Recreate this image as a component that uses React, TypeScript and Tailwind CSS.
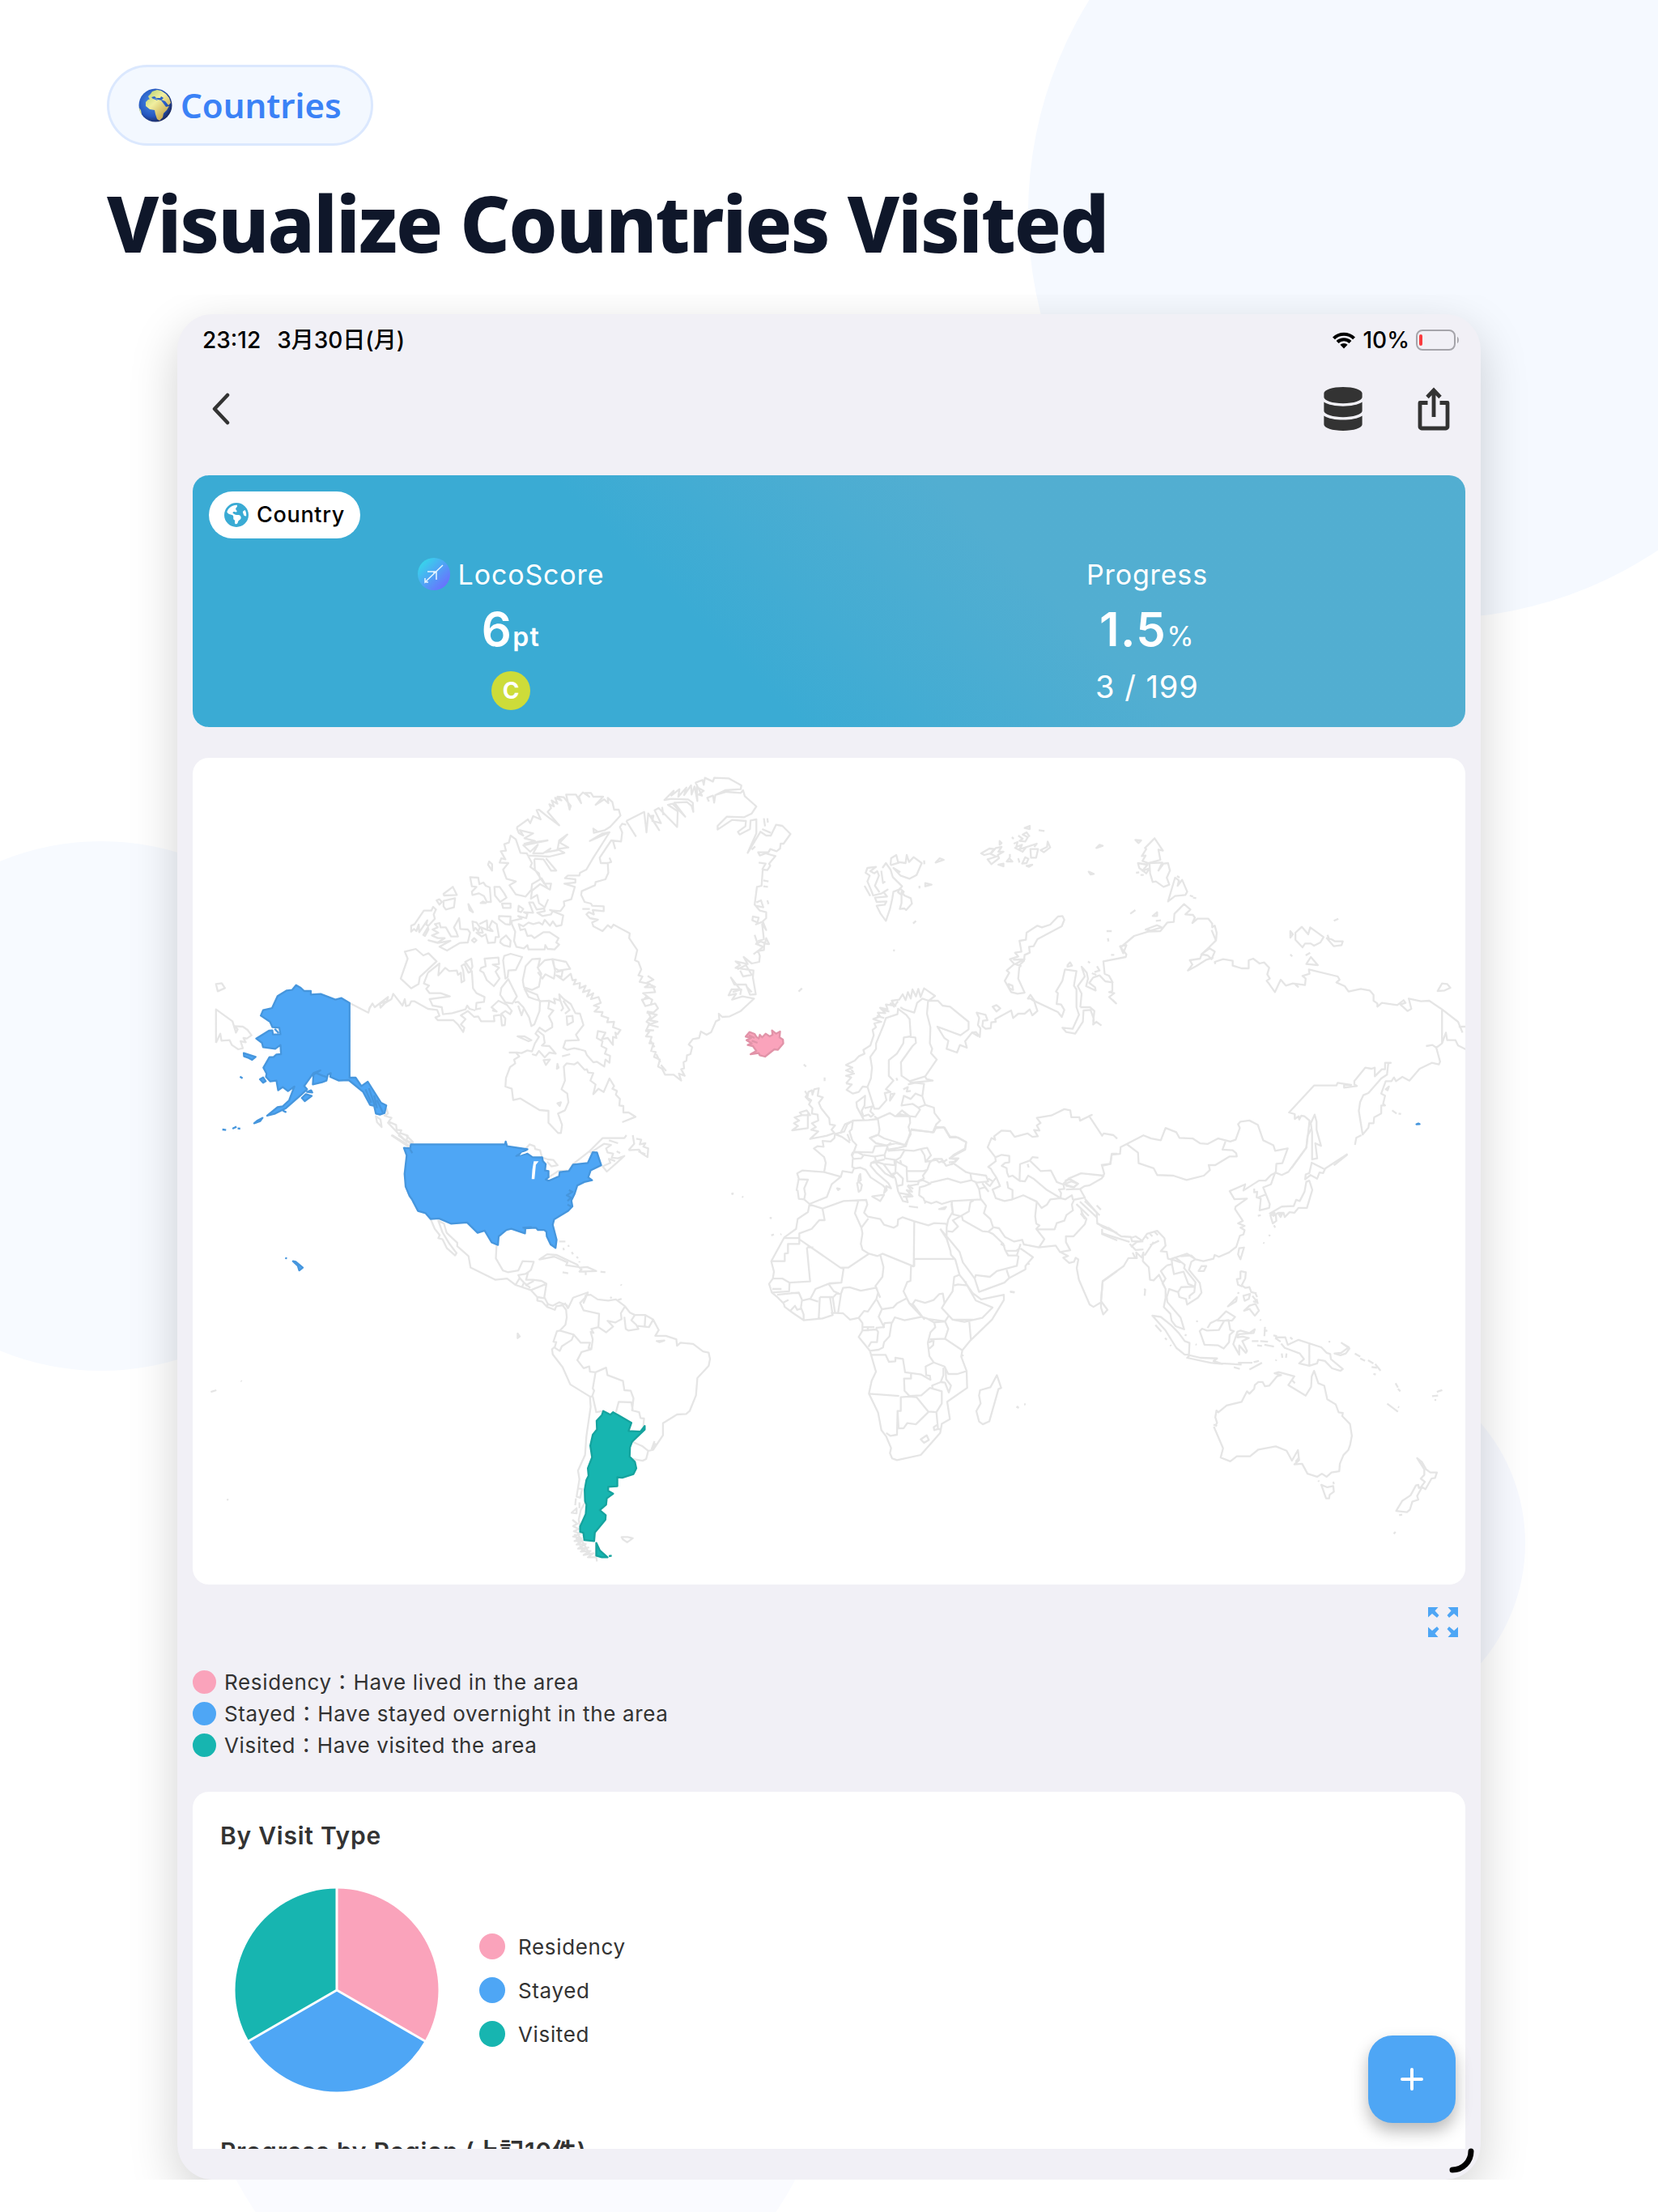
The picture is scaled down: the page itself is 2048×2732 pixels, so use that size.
import { FaDatabase } from 'react-icons/fa';
import { FaEarthAmericas } from 'react-icons/fa6';

interface MapSheet {
  transform: string;
  land: string;
  stayed?: string;
  visited?: string;
  residency?: string;
}

const visitTypes = [
  { name: 'Residency', note: 'Have lived in the area', dot: 'bg-[#faa3bb]' },
  { name: 'Stayed', note: 'Have stayed overnight in the area', dot: 'bg-[#4ea6f5]' },
  { name: 'Visited', note: 'Have visited the area', dot: 'bg-[#17b5b0]' },
];

// Mercator outlines, one sheet per part of the world
const sheets: MapSheet[] = [
  // Alaska and northern Canada
  {
    transform: 'translate(-8 -4) scale(.357143 .333333)',
    land: `
      M103 850 123 847 134 865 109 877Z
      M103 1068 103 944 160 988 172 1030 178 1018 168 1006 196 1008 212 1020 226 1040 210 1052 198 1050 206 1066 188 1062 196 1088 180 1092 158 1076 150 1058 122 1060 118 1034 103 1068
      M565 920 630 956 636 934 632 944 644 922 652 936 698 898 694 914 670 922 672 938 688 920 710 906 716 886 748 930 756 906 760 932 772 928 778 914 790 914 836 942 868 946 876 968 862 974 870 984 924 984 940 1000 958 1028 962 1012 950 1000 966 980 950 966 974 950 996 972 1010 970 1020 988 1066 988 1064 968 1088 964 1092 1004 1102 1002 1104 978 1090 960 1104 950 1120 962 1126 950 1110 928 1080 912 1056 936 1074 952 1058 948
      M756 730 794 720 820 744 838 736 866 766 808 824 804 850 778 866 742 830 766 756Z
      M836 808 876 774 872 818 896 790 910 802 936 800 940 816 950 808 952 844 962 838 958 800 952 782 962 776 976 808 988 802 992 866 1004 884 1032 898 1030 916 1004 920 1002 944 1020 940 M836 808 822 848 840 856 830 868 842 884 880 884 912 896 842 906 852 930 884 936 888 962 920 958 966 944 972 930 980 942 1000 948
      M965 768 986 756 990 786 984 798Z
      M890 516 922 490 936 520 892 522Z M866 540 876 536 884 546 876 556Z M890 542 930 532 926 566 898 574 890 562Z
      M778 634 790 628 822 578 848 578 854 564 864 574 856 592 860 608 838 634 830 630 834 614 806 658 804 630 796 654 788 646 778 656Z
      M820 668 836 640 838 648 826 672Z M838 688 870 696 894 680 870 680 850 670 872 660 852 648 870 640 860 628 876 624 880 640 898 640 916 674 940 674 934 656 926 640 944 606 948 646 974 648 982 660 974 696 946 698 902 726 876 712 914 690 870 698Z
      M982 454 1010 456 1014 480 1028 474 1036 486 1050 492 1054 546 1040 546 1030 524 1012 514 990 520 988 508 1004 490 988 488Z
      M1048 396 1058 406 1058 430 1044 408Z M1066 490 1084 490 1100 514 1108 530 1086 546 1068 522Z
      M976 554 992 584 980 576Z M1018 550 1026 544 1036 550Z M1092 552 1122 552 1122 568 1096 568Z M1150 560 1166 572 1158 584 1148 580Z
      M990 618 1004 622 1016 640 1010 654 1000 642 994 652Z M1014 628 1040 614 1042 650 1020 640 1026 660 1004 660 1022 674 1036 666 1044 698 1068 696 1070 676 1082 676 1074 628 1058 616 1048 640 1060 654 1040 650
      M1082 598 1122 600 1120 630 1104 628 1082 610Z M996 680 1004 688 996 696 988 688Z M1088 686 1106 670 1122 690 1120 712 1098 706 1086 696Z
      M1126 616 1160 608 1148 598 1176 606 1180 590 1168 584 1200 586 1186 548 1200 548 1212 574 1238 570 1240 580 1214 586 1232 598 1262 592 1268 578 1258 576 1304 596 1298 632 1280 636 1268 618 1258 634 1240 612 1232 630 1220 622 1200 628 1184 622 1166 636 1150 628 1156 650 1172 646 1180 672 1194 670 1204 680 1236 658 1256 658 1288 680 1280 696 1290 704 1274 722 1250 720 1242 706 1240 722 1184 722 1180 706 1168 718 1142 712 1134 690 1138 656 1126 628Z
      M1100 746 1122 738 1162 750 1140 798 1114 800 1112 824 1104 830 1096 762Z
      M1020 790 1036 784 1032 756 1080 752 1082 776 1060 778 1082 790 1070 804 1084 830 1064 858 1040 836 1028 808 1016 800Z
      M1196 758 1224 756 1216 790 1228 812 1220 860 1196 872 1168 862 1164 836 1174 784Z
      M1114 832 1144 896 1128 922 1104 918 1086 890 1090 864Z
      M1268 758 1314 768 1328 794 1288 800 1274 790Z M1214 790 1240 762 1266 758 1276 800 1272 830 1242 814 1232 830 1216 806
      M1280 806 1302 800 1298 824 1280 818 1304 836 1330 812 1336 836 1348 834 1340 852 1362 846 1360 866 1382 856 1372 880 1396 872 1386 896 1408 884 1400 906 1426 898 1434 920 1410 930 1428 936 1412 952 1440 954 1436 968 1460 976 1456 992 1480 990 1476 1010 1502 1020 1492 1036 1484 1030 1488 1050 1476 1046 1476 1076 1458 1050 1438 1054 1450 1030 1424 1024 1420 1050 1440 1062 1436 1080 1454 1090 1448 1108 1466 1116 1464 1142 1450 1130 1446 1156 1420 1138 1408 1140 1386 1114 1380 1098 1360 1092 1342 1088 1318 1094 1304 1086 1312 1060 1358 1058 1348 1038 1374 1002 1362 960 1346 958 1330 924 1306 906 1290 888 1294 912 1272 904 1276 922 1256 912 1222 914 1214 890 1186 878 1168 866
      M1170 868 1184 898 1204 906 1224 912 1222 950 1204 1000 1194 1006 1186 974 1166 936 1148 916 1136 918 M1148 930 1160 966 1168 940
      M1316 970 1336 968 1338 990 1318 1002Z M1290 900 1304 940 1296 950 M1304 912 1326 946 1310 960
      M1256 912 1252 940 1270 948 1254 970 1266 996 1266 1010 1242 1026 1222 1012 1208 1034 1220 1046 1206 1070 1196 1100 1180 1096 1160 1106 1142 1104 1116 1104 M1146 1044 1170 1044 1194 1058 1184 1062Z
      M1214 1022 1236 1040 1240 1068 1230 1078 1256 1080 1278 1108 1256 1104 1240 1122 1220 1098 1210 1114 1196 1110
      M1140 1104 1152 1118 1134 1130 1138 1144 1120 1158 1106 1198 1104 1230 1126 1238 1131 1280 1156 1274 1222 1317 1253 1320 1253 1364 1286 1402 1296 1402 1300 1372 1286 1330 1310 1318 1322 1288 1318 1256 1298 1240 1310 1208 1306 1156 1316 1144 1342 1148 1354 1140 1378 1168 1386 1166 1390 1178 1408 1180 1398 1208 1416 1222 1408 1258 1426 1238 1444 1250 1464 1200 1480 1228 1474 1238 1490 1246 1486 1260 1500 1276 1498 1300 1512 1302 1512 1326 1530 1326 1554 1342 1508 1362
      M1236 1132 1258 1130 1244 1150Z M1284 1146 1288 1160 1282 1164Z M1284 1292 1296 1288 1292 1302Z M1300 1118 1328 1110
      M692 1310 698 1330 686 1338 710 1346 700 1360 726 1372 728 1390 744 1392 740 1402 766 1412 762 1430 782 1440 776 1452 712 1410 M656 1340 672 1352 676 1380 660 1362Z M696 1362 730 1400 756 1430
      M1143 270 1182 240 1190 254 1200 228 1226 240 1212 206 1220 204 1250 230 1290 262 1250 212 1262 198 1256 184 1272 192 1264 170 1284 182 1276 160 1298 170 1284 156 1306 158 1330 190 1326 204 1314 148 1348 148 1366 180 1358 156 1372 140 1394 156 1380 142 1400 142 1408 156 1442 156 1416 186 1446 166 1460 180 1458 160 1474 176 1480 204 1496 204 1502 226 1466 268 1448 280 1410 290 1408 274 1424 286 M1464 288 1396 320 1440 292 1464 288 1408 382 1384 426 1362 438 1360 448 1320 448 1310 458 1346 462 1346 474 1308 478 1344 490 1332 536 1306 544 1308 560 1294 580 1270 578
      M1143 270 1150 290 1166 300 1154 280 1200 292 1170 310 1206 320 1170 330 1250 318 1166 336 1190 360 1216 334 1200 366 1234 366 1260 348 1244 362 1284 354 1290 318 1318 296 1292 326 1322 344 1284 350 1308 364 1256 378 1180 374
      M1122 300 1140 314 1156 364 1178 366 1196 402 1190 416 1220 440 1224 462 1196 480 1194 500 1174 526 1140 518 1118 484 1140 470 1108 460 1096 426 1114 402 1084 400 1090 384 1104 388 1088 358 1106 356 1100 332 1116 326Z
      M1204 386 1236 388 1262 430 1280 430 1244 384 M1204 386 1206 426 1238 478 1262 478 1258 500 1224 480 1196 504 1192 534 1214 520 1220 550 1240 566 1252 536 M1228 456 1250 496`,
    stayed: `
      M565 920 537 902 516 908 465 887 431 889 431 876 408 876 396 864 380 854 366 872 348 874 316 895 297 939 266 947 258 967 290 990 298 1010 322 1012 326 1036 300 1037 298 1022 286 1023 242 1052 262 1068 266 1084 308 1090 326 1076 328 1110 312 1111 302 1121 288 1121 267 1160 278 1182 276 1194 291 1211 312 1208 318 1244 334 1232 352 1247 374 1230 356 1281 334 1303 316 1306 280 1338 308 1330 345 1310 400 1258 418 1240 408 1228 440 1180 464 1170 440 1186 438 1222 470 1214 485 1208 490 1186 500 1180 498 1194 528 1208 562 1206 612 1250 622 1270 636 1298 650 1302 656 1330 670 1334 686 1328 692 1300 674 1290 628 1212 606 1228 586 1197 565 1197Z
      M199 1106 240 1120 228 1131 216 1124 200 1118Z M186 1193 195 1199 M255 1203 266 1196 275 1210 266 1216Z
      M400 1272 414 1258 434 1265 410 1284Z M418 1250 432 1244 436 1252Z M336 1320 344 1324Z
      M235 1366 245 1357 264 1346 256 1358Z M160 1386 174 1379 M178 1385 187 1386 M125 1389 138 1391
      M306 1016 320 1032 M620 1240 640 1290 M632 1236 652 1300 M650 1262 660 1310 M660 1280 680 1326 M450 1180 472 1190 490 1196`,
  },
  // Greenland, Iceland, Svalbard and Scandinavia
  {
    transform: 'translate(462 -4) scale(.357143 .333333)',
    land: `
      M206 246 268 212 276 288 282 218 320 280 290 228 300 226 296 246 326 254 304 206 318 198 382 268 384 210 350 186 366 182 410 230 372 178 416 176 432 190 438 212 436 178 420 166 362 164 338 168 370 134 362 152 390 128 386 156 414 122 406 150 430 114 432 148 442 118 452 172 450 120 474 134 456 148 468 152 446 104 470 94 474 112 478 86 506 100 510 86 560 88 604 114 602 128 548 132 514 150 510 178 506 152 486 160 492 174 M514 150 552 138 602 142 610 132 616 154 656 192 640 218 614 232 554 230 522 264 522 278 572 242 620 246 618 266 592 286 598 296 634 276 636 244 656 240 656 292 626 364 670 286 690 300 706 300 724 260 746 264 774 294 750 330 740 330 738 348 726 358 704 350 698 362 662 362 668 374 688 366 722 376 700 404 704 412 694 428 678 426 674 486 658 490 650 556 668 578 690 584 690 606 678 618 690 650 676 628 682 684 664 690 684 698 682 724 662 728 668 746 666 768 640 774 612 750 626 776 584 766 600 780 584 790 646 800 644 826 654 888 634 890 620 852 580 852 568 826 600 870 570 870 560 892 586 886 572 908 608 896 648 904 628 924 602 950 564 970 538 972 526 960 528 982 516 988 500 1028 484 1038 464 1026 458 1050 436 1054 422 1074 434 1084 428 1110 416 1114 414 1134 404 1140 406 1162 396 1166 408 1190 388 1182 396 1208 370 1186 340 1186 330 1164 316 1156 322 1130 302 1120 308 1102 292 1098 300 1070 286 1070 294 1046 274 1044 286 1026 274 1024 286 996 276 990 290 972 280 952 300 956 316 940 306 922 272 932 260 908 286 902 264 884 306 880 300 862 270 862 288 850 252 842 262 822 248 818 258 796 248 768 236 762 244 724 216 680 218 662 162 630 154 642 142 632 124 654 92 636 88 622 108 612 80 606 68 592 76 584 94 592 90 576 128 580 128 562 88 560 84 552 62 546 50 520 52 506 98 484 100 472 134 462 144 438 142 402 118 402 114 382 154 318 188 322 192 288 184 268 192 256 206 260
      M206 246 240 304 M54 572 80 572 M148 382 154 398 142 402 M160 320 168 350 M330 194 334 224 M682 236 686 266 M694 236 696 252 M676 276 706 290 M664 400 688 404 676 426 M680 466 698 470 M680 488 696 490 M656 548 672 540 680 566 654 560 M694 540 698 554 M644 600 664 604 660 622 642 614Z M652 630 676 620 M650 668 660 700 674 690 M690 680 700 702 686 700Z M652 700 680 712 646 740 M590 796 620 780 640 816 610 822 600 800 M574 880 604 870 600 890 M622 860 640 880
      M262 912 276 896 296 908 290 928 M280 820 300 834 276 846 308 862 M276 956 312 964 286 984 314 990 284 1000 318 1010 M276 1020 302 1022 M290 1060 304 1084 M310 1110 324 1140 M326 1150 344 1172
      M640 352 652 340 M1092 420 1104 402 1120 426 1128 454 1160 488 1150 500 1130 508 1126 534 1118 572 1104 616 1086 590 1072 560 1100 556 1106 544 1072 546 1066 530 1108 526 1096 510 1110 500 1090 514 1060 522 1052 500 1040 470 1048 448 1034 438 1040 420 1070 416 1050 432 1064 440 1074 432 1080 448 1066 486 1082 510 M1088 430 1094 476 1102 470
      M1030 486 1050 524 M1120 410 1122 384 1140 372 1146 398 1172 402 1176 372 1184 398 1200 380 1228 402 1210 446 1186 460 1154 448 1130 420 1154 436 M1120 410 1150 400 M1158 508 1168 522 1190 532 1194 552 1174 576 1168 570 1152 572 1158 550Z M1152 496 1166 508 1158 520 1146 510Z
      M1276 400 1290 384 1304 390Z M1240 476 1262 482 1240 488Z M1236 392 1237 406 M1220 486 1220 496 M1198 626 1208 616 M1129 725 1135 726 M802 878 814 866 M820 1148 828 1156 M892 1196 892 1210
      M966 1218 986 1222 968 1242 990 1256 1010 1250 1024 1230 1040 1232 1052 1200 1056 1160 1050 1120 1070 1090 1070 1070 1096 1002 1104 976 1144 962 1146 942 1174 964 1186 980 1190 1044 1166 1048 1164 1070 1142 1108 1114 1132 1114 1190 1130 1208 1104 1240 1120 1250 1100 1254 1106 1280 1090 1300 1080 1312 1064 1312 1040 1230
      M966 1218 984 1196 966 1190 994 1182 966 1170 988 1160 966 1150 996 1134 1010 1118 1030 1108 1026 1094 1050 1078 1062 1040 1058 1020 1070 1010 1064 996 1088 990 1060 980 1084 970 1076 956 1102 958 1084 938 1110 944 1104 926 1134 930 1124 912 1150 908 1162 888 1172 910 1180 880 1190 904 1196 870 1208 896 1216 868 1224 898 1236 866 1274 894 1252 912 1230 904 1212 920 1202 956 1166 944 1154 936
      M1072 968 1098 976 M1090 946 1116 952 M1118 920 1140 932 M1130 936 1146 914 M980 1160 992 1178 M1250 912 1246 960 1258 1010 1256 1070 1264 1090 1260 1106 1280 1130 1240 1192 1186 1210 1158 1190 1156 1140 1196 1080 1208 1068 1206 1048 1186 1046
      M1240 1192 1244 1202 1266 1208 1186 1216 M1252 912 1284 912 1300 930 1326 934 1390 990 1390 1018 1362 1040 1282 1008 1306 1050 1320 1060 1314 1090 1350 1104 1360 1076 1384 1086 1378 1062 1402 1030 1424 1044
      M1120 1258 1134 1256 1118 1282Z M1140 1198 1144 1208 M1164 1240 1180 1232 1176 1248 1190 1246 M1180 1222 1206 1216 1236 1220 1230 1266 1206 1256 1190 1276 1166 1264 1158 1300 1196 1294 1216 1308 1222 1316 1206 1342 1188 1340 M1230 1266 1240 1298 1216 1308 M1140 1338 1160 1318 1182 1340Z M1240 1298 1270 1308 1272 1328 1292 1356 1278 1370 1266 1400 1190 1388 M1306 1380 1278 1384
      M1076 1348 1118 1328 1136 1340 1186 1340 1188 1364 1182 1380 1190 1406 1170 1446 1098 1422 1078 1410 1082 1390Z
      M1028 1354 1004 1306 1002 1288 1032 1264 1030 1300 1020 1320 1026 1340 1044 1334 1052 1342 1062 1334 1050 1322 1056 1304 1030 1310 M1064 1340 1076 1350 1044 1354 990 1356 986 1388 978 1396 988 1430 1002 1446 988 1486 M946 1404 962 1370 984 1360
      M1078 1408 1048 1420 1070 1440 1106 1448 1140 1440 1170 1446 M1190 1406 1184 1390 M1306 1380 1326 1416 1346 1416 1382 1436 1378 1464 1350 1480 1324 1496 1350 1500 1330 1520
      M872 1236 868 1264 886 1270 872 1290 880 1310 908 1348 910 1370 928 1374 916 1390 926 1402 900 1412 842 1424 870 1396 846 1390 862 1380 848 1366 870 1356 868 1334 848 1330 850 1310 838 1296 846 1280 832 1272 836 1250 848 1244 850 1260 856 1240Z
      M824 1246 832 1260 826 1268 840 1284 M834 1330 834 1384 780 1392 800 1376 786 1366 804 1356 788 1344 814 1336 806 1326 830 1318 842 1336 816 1336`,
    residency: `
      M619 1045 632 1028 650 1035 656 1046 664 1052 668 1038 676 1048 688 1034 702 1044 712 1038 710 1022 724 1034 738 1026 736 1048 748 1056 749 1070 730 1094 718 1092 686 1119 668 1114 664 1106 636 1110 656 1098 644 1080 626 1076 640 1070 622 1058 638 1050Z
      M630 1040 650 1050 M640 1060 660 1068`,
  },
  // Siberia and the Arctic islands
  {
    transform: 'translate(962 -4) scale(.395408 .333333)',
    land: `
      M30 366 56 348 70 350 60 366 40 372Z M76 346 94 342 84 360 100 360 82 372 86 384 62 406 50 388 78 378 60 368Z M84 408 100 404 100 414Z M88 320 94 328 88 334Z M166 272 182 264 182 276Z M210 280 228 283
      M126 306 132 312 M146 300 160 312 150 320 168 322 176 306 160 296 172 288 182 304 M132 330 144 324 140 342 158 334 150 350 170 344 158 362 M134 344 160 360 M110 396 118 384 128 396Z M120 368 120 382 M146 384 150 400 M158 404 168 380 178 386 172 402Z M184 350 208 350 202 382 186 382Z M168 344 204 330 196 342 M216 354 236 342 238 322 246 344 226 362Z M172 412 190 408 180 416Z
      M390 346 400 334 410 338Z M366 434 382 442 372 444Z M512 316 530 318 522 328Z
      M572 310 598 356 584 352 590 390 552 402 534 394 544 374 532 376 546 350 542 346Z M520 402 550 408 534 430 556 422 546 440 524 420Z M556 402 596 400 584 430 600 404 614 402 620 430 610 456 618 482 600 490 576 470 566 472 558 440Z
      M514 438 524 436 M528 446 538 446 M614 544 636 456 648 466 644 486 658 464 674 508 668 520 636 524Z M642 450 650 456 M682 522 692 526 M692 530 702 532
      M566 598 580 584 580 598Z M496 590 512 576 M576 616 592 614 M422 654 438 654 M426 680 428 692 M436 742 446 742
      M104 838 118 808 110 800 134 776 120 758 146 748 136 734 156 730 150 690 170 686 172 660 206 634 220 640 246 630 270 600 284 598 290 612 282 636 206 684 194 710 180 712 182 734 166 742 164 764 150 780 146 830 166 882 144 886 124 880Z
      M116 850 128 856 130 872 118 866Z M130 760 166 758 136 776 156 784 M300 780 308 770 314 782 300 786Z
      M0 1030 14 1028 26 1046 28 1014 20 1002 24 976 16 956 44 964 50 984 36 986 34 1006 44 1016 60 1014 62 992 76 990 74 980 124 948 130 976 146 960 166 960 182 944 190 966 206 950 196 914 184 904 176 904 184 890 198 914 270 954 282 972 290 946 280 926 266 924 270 884 264 878 284 838 292 796 328 802 320 856 328 870 328 936 336 964 316 1016 284 1012 296 1028 324 1034 348 990 350 948 372 946 382 980 380 1000 390 990 406 1004 M340 936 370 936 384 950 380 990 M340 936 344 886 332 858 354 822 344 786 360 808 364 830 358 858 388 874 386 862 368 846 380 826 400 818 418 840 440 844 440 876 430 880 446 884 430 898 452 922 440 908 M66 934 78 928 90 940 78 952Z
      M442 846 430 820 416 812 412 766 482 750 484 740 466 714 490 690 508 672 552 656 590 654 612 622 632 620 634 590 664 554 684 574 668 592 692 594 698 604 690 624 706 608 740 608 752 626 752 640 760 634 766 660 764 688 742 714 720 738 714 756 682 762 690 778 676 800 702 784 734 760 756 752 M718 740 738 744 750 758 760 730 744 718Z M764 690 750 650 M762 776 760 768 786 758 816 764 816 782 844 792 866 792 866 762 880 756 900 774 914 770 930 790 924 814 932 830 922 838 930 850 948 880 966 834 982 856 1004 848 1042 854 1044 830 1034 820 1056 812 1054 796 1144 822 1150 834 1140 844 1166 858 1178 878 1216 868 1244 874 1256 890 1256 912 1268 922 1268 934 1282 920 1330 928 1350 910 1356 920 1340 926 1362 950 1374 942 1366 904 1404 914 1430 912 1470 944 1520 990 1534 1030 M1522 1008 1548 1008
      M1470 944 1470 1070 1452 1086 1440 1076 1420 1080 M1452 1086 1464 1138 1460 1148 1438 1142 1400 1164 1368 1208 1346 1194 1326 1210 1320 1196 1312 1210 1294 1210 1280 1256 1292 1264 1286 1294 1292 1300 1280 1300 1280 1330 1258 1344 1256 1366 1242 1366 1240 1382 1222 1408 1210 1320 1214 1288 1224 1262 1240 1254 1280 1200 1298 1186 1302 1144 1310 1142 1292 1142 1292 1166 1282 1166 1260 1192 1260 1160 1250 1164 1230 1160 1196 1210 1196 1222 1204 1228 1164 1234 1164 1224 1186 1224 1144 1216 1140 1226 1070 1226 992 1326 1010 1332 1010 1350 1022 1340 1024 1352 1030 1338 1040 1340 1056 1356 1052 1400 1046 1456 1000 1532
      M1470 1070 1482 1030 1486 1058 1512 1058 1520 1078 1548 1094
      M464 710 484 706 474 736 468 720Z M544 648 580 632 594 640 560 652Z M364 766 370 772 M392 784 400 800 384 806 M376 810 390 816
      M1012 660 1032 638 1052 666 1058 640 1100 676 1090 696 1070 708 1060 700 1042 700 1034 714 1012 686Z M996 654 1004 666 996 678Z M1110 680 1124 684 1136 692 1160 692 1156 706 1132 710Z M1112 668 1116 680 M1132 616 1146 608 M996 740 1002 748 M1044 744 1058 734 M1046 776 1060 750 1082 780Z M1010 850 1022 862
      M1456 876 1470 848 1486 850 1496 864 1478 874Z M1294 1240 1304 1230 1300 1244Z M1314 1318 1328 1330 M1334 1330 1342 1332
      M1064 1400 1060 1366 1072 1334 1078 1360 1078 1390 1092 1450 1074 1440 1080 1496 1064 1500Z M1198 1446 1202 1420 1218 1410 M1132 1522 1174 1482`,
    stayed: 'M1390 1370 1400 1369 1396 1367Z',
  },
  // The Americas south of the 49th parallel
  {
    transform: 'translate(-8 466) scale(.433673 .357143)',
    land: `
      M966 48 978 32 992 38 994 48 1008 52 1014 80 M1016 78 1030 84 1046 86 1058 104 1040 108 1028 92 M1032 146 1060 124 1090 122 1102 100 1150 54 1186 10 1248 10 1254 0 M1150 62 1190 30 1210 34 1196 46 1200 60 1216 64 1212 78 1230 80 1248 72 1226 96 1198 126 1186 108 1208 96 1204 82 1222 90 M1204 18 1230 28 M1226 56 1236 62 M1260 52 1276 30 1272 0 M1260 52 1290 50 1296 62 1314 76 1316 46 1302 40 1308 28 1292 32 1296 16 1282 12 M1288 56 1308 66
      M584 0 636 42 646 24 626 0 M604 0 640 30 M612 4 630 26
      M696 290 708 324 722 346 718 356 730 360 742 390 766 416 770 408 750 376 730 336 718 296 734 306 742 338 772 372 772 384 804 418 810 458 880 500 914 496 938 518 982 536 1000 560 1000 572 1014 576 1028 594 1050 604 1054 592 1072 588 1082 604 1084 630 1080 656 1064 676 1056 678 1046 714 1054 716 1050 732 1042 740 1044 758 1072 802 1094 862 1150 904 1152 940 1140 1040 1136 1106 1116 1160 1120 1190 1112 1250 1122 1254 1128 1224 1118 1222
      M884 382 882 426 902 468 916 474 946 468 958 436 990 438 982 466 974 474 968 500 988 500 1012 504 1026 514 1020 560 1030 584 1044 590 1062 578 1084 588 1088 598 1102 562 1144 544 1132 580 1138 554 1152 552 1172 568 1202 572 1224 568 1250 592 1264 614 1278 622 1308 622 1330 638 1346 674 1336 694 1366 694 1396 706 1398 728 1408 718 1444 722 1472 748 1488 752 1492 774 1488 798 1456 840 1452 900 1434 954 1424 964 1398 966 1358 996 1358 1038 1330 1088 1316 1092 1310 1120 1300 1126 1264 1118
      M938 518 950 494 946 484 966 480 974 474 M950 494 962 510 956 526 M966 520 990 504 M982 536 1026 514 M962 510 980 528 M1000 560 1020 564 M1028 594 1030 580 M1078 580 1088 600
      M1138 560 1122 580 1132 606 1176 618 1174 664 1196 682 1216 662 1200 642 1222 648 1240 636 1238 616 1250 592 M1248 628 1252 670 1260 676 1288 670 1282 656 1268 640 1278 622 M1308 622 1306 660 M1330 638 1318 664 1286 660 M1174 664 1154 670 1160 684 1152 680 1158 706 1154 740 1146 736 1150 718 1124 718 1104 690 1064 676 M1104 690 1098 708 1070 730 1064 746 1048 734 M1154 740 1126 750 1114 778 1132 806 1148 800 1150 818 1166 820 1196 804 1200 830 1244 850 1248 882 1266 884 1274 910 1270 952 1290 958 1294 978 1304 980 1302 1010 M1166 820 1158 876 1162 884 1156 904 1150 904 M1158 904 1168 958 1188 954 M1224 958 1232 922 1268 924 1272 952
      M1270 1060 1300 1076 1318 1094 M1334 1058 1326 1084 1338 1066
      M1112 1290 1098 1306 1112 1308Z M1110 1256 1108 1280 M1120 1270 1120 1290 M1136 1270 1124 1296 1118 1330 1122 1356 M1100 1330 1114 1344 1102 1352 1118 1362 1104 1370 1122 1378 1102 1388 1126 1394 1106 1404 1130 1402 1112 1416 1138 1414 1116 1430 1146 1426 1124 1440 1152 1438 1132 1452 1160 1446 1144 1460 1168 1460 1170 1474 M1106 1380 1130 1440 M1116 1380 1150 1450 M1168 1408 1166 1460
      M1006 430 1028 412 1054 414 1114 448 1118 456 1082 450 1086 440 1048 420Z M1120 458 1142 456 1168 470 1120 472 1126 464Z M1072 474 1088 478 M1180 472 1194 474 M1138 472 1138 484
      M1062 368 1080 368 M1088 380 1090 386 M1074 390 1076 398 M1098 404 1102 412 M1112 420 1116 426 M1120 436 1120 440 M1238 516 1240 520 M1208 560 1212 564 M1230 570 1240 566 M1340 712 1362 710 1348 716Z
      M944 686 950 696 944 702Z M70 888 86 882 M156 849 158 852 M116 1259 120 1262 M1240 1390 1258 1390 1272 1394 1256 1408 1244 1398Z M1555 200 1558 204`,
    stayed: `
      M640 32 908 32 910 22 914 38 972 49 940 72 972 64 986 76 1014 77 1016 90 1024 100 1022 122 1032 124 1032 146 1024 153 1032 158 1062 142 1064 128 1090 124 1102 102 1144 96 1158 59 1170 60 1182 104 1152 122 1145 146 1156 156 1134 162 1114 174 1106 204 1097 226 1100 246 1088 262 1048 291 1044 310 1055 362 1052 390 1038 378 1027 350 1026 334 1020 328 1002 328 996 320 966 322 965 340 926 324 912 328 890 350 888 380 870 371 850 330 830 338 800 302 754 306 720 288 696 290 682 270 660 262 643 222 636 210 625 178 622 134 628 70 620 44 638 46Z
      M282 425 287 426 M304 436 312 438 332 458 322 468 318 452Z
      M1090 190 1100 196 1084 208 1096 216 1086 228 M1086 240 1098 248 M958 320 984 318 M638 50 644 62`,
    visited: `
      M1188 954 1208 967 1216 958 1268 995 1260 1023 1294 1025 1306 1006 1306 1018 1270 1060 1264 1080 1263 1112 1278 1130 1282 1152 1274 1172 1242 1185 1228 1183 1228 1214 1202 1216 1202 1230 1216 1240 1198 1256 1196 1278 1178 1297 1195 1314 1194 1330 1164 1374 1162 1404 1134 1400 1131 1375 1122 1372 1122 1354 1138 1310 1140 1278 1136 1266 1135 1226 1140 1192 1146 1178 1144 1152 1156 1114 1151 1074 1158 1036 1170 1018 1169 988 1184 968Z
      M1168 1410 1178 1436 1200 1460 1184 1460 1168 1454Z M1204 1456 1212 1454`,
  },
  // Southern Europe, Africa and the Middle East
  {
    transform: 'translate(642 366) scale(.333333 .357143)',
    land: `
      M360 518 340 502 320 500 316 472 312 470 320 430 314 412 334 402 414 408 420 376 414 356 376 326 390 318 412 320 408 300 438 302 452 290 454 276 488 268 500 242 520 230 M318 432 354 434 340 464 344 484 340 502 M360 518 424 494 442 450 476 424 414 408 M476 424 482 404 518 410 524 396 548 392 568 400 586 426 632 454 640 462 636 480 646 470 644 456 662 464 652 446 610 412 586 386 588 376 602 370
      M592 492 636 486 622 508Z M548 414 550 436 540 440 544 420Z M536 446 544 442 554 452 550 470 542 476Z M462 464 472 466 466 470Z M728 526 762 530 M840 536 866 528 860 536Z M786 512 790 516
      M454 276 480 286 510 306 M500 276 510 300 M520 340 540 340 560 350 552 360 522 362 516 348Z M520 362 518 390 528 394 M526 338 594 340 602 318 648 316 662 306 M560 348 600 354 638 348 648 322 M648 316 650 330 690 324 716 318 720 306 M584 290 612 280 M638 348 640 360 680 366 696 358 712 332 M650 334 712 330
      M602 354 606 370 638 364 M588 376 614 374 634 380 676 384 674 366 M634 380 666 420 678 412 M606 378 640 412 672 428 M696 366 700 380 720 390 720 404 782 404 796 400 806 374 822 362 850 362 866 386 894 378 940 408 956 412 M712 332 746 334 772 328 786 350 790 374 M772 328 796 324 810 350 790 372 830 366 840 374 852 370 M720 404 722 440 760 440 784 430 780 420 796 400
      M666 414 684 410 706 430 704 452 684 456 678 430Z M700 380 680 370 678 410 M684 456 688 474 706 508 724 512 718 494 742 492 720 470 740 476 724 456 762 450 764 440 M760 440 780 436 808 448 786 456 768 460 766 488 782 498 786 508 812 516 830 510 850 518 886 508 M762 450 766 436 M692 480 730 486 M706 494 740 488 M724 452 744 466
      M736 262 820 270 830 252 858 254 880 288 910 288 940 304 936 326 894 348 880 360 912 360 900 372 876 374 M736 262 716 320 M848 360 854 374 870 364 M710 200 736 218 M690 206 726 214
      M956 412 960 436 920 444 872 430 808 444 M956 412 1014 420 1022 440 1000 442 980 444 960 436 M974 440 988 466 1010 460 1022 474 1000 446 M1022 430 1040 440 1028 456 1012 444 M1040 440 1052 426 1040 410 1032 396 1022 390 1050 370 1048 356 1020 322 1034 290 1048 296 1044 284 1072 264 1104 266 1120 286 1168 274 1186 286 1206 284 1192 262 1212 264 1202 246 1216 238 1202 220 1256 212 1304 190 1326 194 1330 218 1360 218 1362 230 1406 210 1396 214 1444 282 1450 274 1486 280 1500 292
      M1050 356 1072 348 1100 352 1100 374 1084 376 1072 386 1090 394 1092 410 1098 424 1112 420 1138 438 1140 380 1176 368 1216 404 1254 402 1276 442 1298 450 1320 430 1366 412 1450 420 1442 430 1396 454 1380 456 1362 466 1380 496 1336 504 M1176 368 1186 356 1208 358 M1168 380 1172 392 M1500 344 1480 344 1474 380 1444 386 1452 414 1442 430
      M1092 440 1096 462 1112 470 1112 502 1082 508 1050 498 1038 468 1066 456 1052 426 M1138 438 1158 440 1170 420 1192 432 1240 470 1290 498 1292 480 1284 468 1304 466 1300 446 M1298 452 1330 440 1354 448 1340 460 1304 450 M1362 466 1310 468 M1112 502 1152 488 1202 510 1220 532 1240 520 1252 502 1290 498 1308 502 1332 488 1336 504
      M988 466 994 500 1014 524 1006 550 1030 570 1040 598 1062 602 1084 632 1118 648 1148 642 1154 658 1210 668 1272 662 1288 684 1326 678 1310 650 1310 630 1338 630 1380 588 1386 570 1370 552 1366 534 M1202 510 1196 560 1200 586 1212 592 1200 604 1230 640 1210 668 M1200 606 1268 606 1276 584 1304 576 1312 556 1336 540 1332 520 1340 504
      M994 502 888 508 886 520 890 546 874 572 868 598 868 630 844 604 M886 508 892 554 920 560 950 544 956 512 968 506 M888 576 924 558 928 574 1000 612 1022 614 1040 600 M892 576 910 596 890 614 872 612 M1022 614 1040 622 1078 656 1084 676 1096 696 1128 696 1142 656 M1068 656 1084 664 M1086 680 1126 680 1140 670 M1142 672 1188 702 1160 732 1160 744 1100 774 1082 790 988 822 972 776 928 720 916 684 870 632 M972 776 976 764 1028 770 1054 750 1128 732 1134 700 1128 696 M1090 746 1100 774
      M1288 684 1318 698 1300 704 1322 722 1340 718 1346 704 1356 710 1350 740 1358 780 1398 866 1412 874 1440 858 1446 786 1500 750 M1440 854 1464 884 1448 900 1440 876Z M1380 500 1424 548 1426 584 1450 600 1500 618 M1444 604 1444 622 1500 644 M1466 600 1500 620 M1370 548 1380 570
      M360 518 354 546 316 570 310 604 266 634 218 716 228 752 224 776 210 794 220 824 238 838 264 862 268 874 300 896 338 920 408 914 446 902 442 894 484 896 510 918 542 912 556 930 556 956 542 978 584 1026 588 1040 606 1098 590 1130 580 1174 614 1240 626 1300 644 1322 662 1362 658 1380 666 1398 684 1404 772 1386 844 1310 850 1278 880 1262 870 1202 944 1154 942 1096 922 1046 926 1024 956 990 1036 918 1080 850 1080 832 996 848 964 826 932 782 916 764 900 710 884 694 882 680 868 638 844 604
      M360 520 408 534 486 508 570 504 574 520 562 548 576 562 622 570 636 590 672 600 686 592 688 572 704 564 748 578 800 592 822 584 864 586 868 590 M408 534 416 574 396 574 368 604 322 620 322 656 280 656 280 688 268 690 268 716 218 716 M264 636 322 636 M322 640 474 738 504 738 580 690 556 676 550 656 556 620 552 600 528 550 540 508 M552 600 578 568 M580 690 612 698 630 690 746 734 748 578 M748 708 900 708 M748 708 748 732 736 734 734 784 722 788 708 820 730 862 740 866 752 850 788 860 820 850 840 830 854 828 860 862 890 820 896 770 918 762 M350 668 374 668 M350 668 362 786 286 790 260 776 224 776 M286 790 284 820 222 824 M222 812 256 812 M474 738 486 742 478 790 436 792 382 812 364 844 M478 790 430 794 450 820 470 828 M398 840 448 840 460 828 476 830 484 808 508 806 550 818 604 808 M398 840 394 914 M436 842 444 892 M446 842 454 892 M476 832 466 892 M622 694 634 736 630 770 604 802 622 842 M606 804 614 824 608 846 576 890 562 888 540 914 M610 850 628 882 616 908 636 944 608 946 608 952 552 956 M628 882 670 876 684 862 720 844 730 862 776 908 712 920 676 910 666 928 638 930 632 948 M240 832 320 824 332 850 328 876 338 900 338 918 M264 858 282 850 M290 886 306 870 314 884 328 880 M332 852 360 846 392 856 M320 826 290 826
      M556 944 600 944 M576 958 576 946 M578 1012 588 996 610 996 614 960 606 950 M584 1026 616 1022 632 1014 636 996 656 976 664 930 M588 1040 642 1040 654 1064 678 1062 678 1050 706 1054 714 1100 774 1108 808 1126 806 1112 792 1110 790 1080 820 1066 804 1044 798 998 808 962 826 944 822 928 800 916 776 908 M736 1100 736 1122 710 1122 712 1164 730 1182 774 1180 806 1154 850 1166 850 1208 830 1238 800 1236 756 1186 728 1184 698 1186 698 1234 686 1234 690 1294 708 1294 722 1276 754 1280 800 1238 M580 1174 692 1182 M686 1234 684 1316 660 1320 644 1310 M830 1238 836 1296 822 1300 820 1290 832 1282 M836 1296 846 1298
      M860 862 850 878 876 904 862 924 800 916 M862 924 874 950 862 984 806 986 M862 984 926 1024 M876 904 890 918 934 926 1000 912 1038 876 976 852 960 826 944 800 910 796 896 800 M952 926 958 990 M892 918 966 918 M820 928 862 924 M798 998 820 990 818 1006 804 1018 M806 986 822 992 M820 1066 860 1080 874 1106 908 1106 942 1096 M856 1084 856 1110 846 1134 862 1136 876 1170 884 1146 866 1124 864 1088 M846 1134 814 1146 816 1156
      M772 1332 794 1318 802 1334 784 1344Z M1054 1110 1070 1154 1060 1158 1026 1270 1002 1280 988 1270 978 1234 994 1208 988 1180 992 1162 1030 1152Z M1128 1218 1134 1222 M1156 1210 1160 1212 M1104 822 1120 824 M926 1040 930 1044 M70 482 78 484 M110 492 114 495 M212 566 220 567 M218 627 228 623 M252 624 256 622 M938 786 940 792 M1172 724 1174 728
      M744 866 786 918`,
  },
  // Asia and Oceania
  {
    transform: 'translate(1002 366) scale(.369898 .382653)',
    land: `
      M410 290 466 262 492 272 524 278 540 238 576 252 586 270 630 272 656 288 680 290 716 272 756 282 774 276 788 238 782 226 790 218 820 214 848 228 866 278 900 294 906 312 948 304 930 352 910 354 908 382 892 390 874 408 852 408 800 440 806 420 754 442 770 468 812 466 774 492 772 500 798 538 782 546 804 554 790 560 804 568 800 582 788 586 776 622 752 640 718 654 704 648 700 660 666 668 640 662 626 670 618 696 654 738 660 770 648 786 612 808 608 790 586 784 582 768 552 758 544 784 546 800 572 830 590 850 602 888 574 878 560 860 556 838 534 816 540 786 540 758 518 712 500 730 488 728 484 688 464 668 466 640 460 656 442 640 444 658 416 658 400 684 330 732 324 796
      M410 290 448 318 450 352 500 368 512 390 566 392 610 406 668 392 688 374 684 358 706 358 754 330 778 330 776 320 764 310 730 308 740 282 M410 290 390 300 388 322 360 324 356 354 324 358
      M310 546 350 562 392 588 424 590 428 604 462 604 M328 578 420 606 M428 592 440 588 462 602 478 580 512 570 536 594 540 618 524 636 544 638 548 660 566 664 M420 612 440 632 466 630 M424 622 444 606 466 604 M500 606 470 650 M518 602 488 616 M430 640 440 660 M544 682 524 700 540 724 530 740 540 758 M544 682 562 678 560 660 612 644 640 662 M562 680 568 710 600 702 616 742 638 750 636 768 620 780 620 790 M600 688 640 736 638 750 592 752 582 768 M572 656 604 680 602 692 M566 664 590 672
      M640 662 626 650 590 652 M650 700 660 684 676 684 668 700Z M802 624 790 662 782 646 786 626Z M468 758 472 760 470 780 M848 522 858 520 M836 434 836 446 846 444 844 462 858 466 854 504 886 496 888 484 866 430 892 420 906 382 928 390 950 380 1010 302 1014 264 1026 242 M846 464 876 452
      M1028 350 1072 372 1066 384 1054 382 1046 402 1024 390 1006 404 1008 388 1020 384Z M1010 412 1020 408 1030 438 1012 496 984 496 970 512 954 510 938 526 934 512 916 512 900 522 904 512 888 514 928 492 968 490 976 470 988 474 1004 444Z M890 520 908 518 910 538 898 546Z M918 516 930 514 924 526Z M902 552 906 560 M884 584 890 586 M866 608 870 610 M1072 370 1148 322
      M790 700 808 704 806 724 794 746 806 754 820 752 826 768 844 772 M790 700 790 724 778 726 782 744 796 750 M748 814 778 784 776 798Z M780 770 786 772 M800 780 822 774 818 790 804 796Z M830 780 846 800 832 798 M840 772 846 784 M802 828 820 812 840 806 852 828 838 844 820 822Z M844 790 848 806 M856 856 858 860
      M496 844 524 848 560 876 584 900 604 926 620 932 618 970 604 970 576 948 540 892Z M506 874 526 896 M538 916 544 922 M556 938 558 942 M604 906 610 908 M640 936 644 938 M612 980 620 972 656 980 712 982 700 990 730 1000 690 996Z M724 998 794 1002 M768 1010 788 1016 M782 996 830 996 M820 1018 862 996 M834 994 852 990
      M654 894 662 886 678 892 718 890 736 860 750 858 756 890 768 894 754 906 752 930 734 950 716 940 670 938Z M680 884 690 868 716 856 742 830 772 848 762 860 712 860 M642 862 648 862
      M780 896 790 892 820 900 838 888 834 900 784 904 780 914 798 912 818 916 796 926 812 958 808 964 786 940 786 970 766 936Z M828 926 850 926 M856 926 882 928 M846 940 862 942 M870 938 902 944 M872 880 870 910 M868 894 880 892 M900 908 912 910
      M906 914 940 914 948 938 984 922 1060 946 1078 964 1090 968 1092 984 1132 1016 1124 1022 1096 1014 1072 990 1050 986 1046 998 1020 1006 986 998 1002 984 988 966 938 948 926 934 M1020 934 1020 1004 M906 916 924 928 M956 914 964 920 M1104 966 1126 964 1152 946 1128 932 1154 950 1142 966 1124 972Z M1084 928 1090 928 M1172 966 1190 976 M1190 982 1206 990 M1216 988 1234 998 M1240 1000 1258 1022 M1228 1010 1246 1012 M1234 1032 1242 1034 M928 966 930 980 M944 966 942 980 M908 990 910 986
      M1036 1022 1050 1062 1070 1070 1080 1114 1108 1130 1118 1156 1132 1158 1130 1168 1156 1194 1162 1232 1156 1262 1150 1278 1134 1294 1122 1322 1120 1346 1094 1350 1078 1364 1062 1354 1046 1364 1014 1354 996 1322 970 1324 986 1310 982 1278 962 1312 944 1280 908 1266 850 1276 822 1298 778 1298 756 1314 724 1302 732 1272 702 1204 712 1190 706 1172 710 1150 716 1156 744 1134 794 1122 812 1088 820 1096 836 1080 838 1068 850 1058 864 1058 872 1072 886 1070 912 1040 926 1036 904 1030 918 1026 970 1040 950 1068 1008 1102 1026 1074 1028 1040Z
      M974 1316 984 1304 M700 1196 712 1200 M960 1050 972 1062
      M1060 1390 1080 1398 1100 1394 1102 1412 1088 1422 1086 1434 1076 1434Z M1100 1380 1102 1388 M1050 1376 1052 1380
      M1380 1304 1396 1316 1410 1340 1424 1350 1446 1350 1440 1368 1428 1370 1408 1404 1394 1396 1406 1380 1392 1370 1404 1358 1404 1340Z M1376 1392 1384 1390 1386 1400 1396 1398 1380 1426 1384 1438 1364 1444 1356 1470 1346 1478 1310 1474 1330 1442 1358 1424Z M1320 1488 1330 1486 M1302 1548 1308 1542
      M1280 1128 1316 1154 M1308 1062 1316 1076 M1316 1080 1324 1088 M1430 1104 1450 1102 M1446 1090 1464 1084 M1438 1116 1444 1116 M1316 1138 1320 1140 M42 1138 50 1142 M68 1130 72 1130 M20 766 36 768
      M242 484 284 522 M254 476 312 528 M310 488 324 502 M256 514 272 532 M270 474 320 520 M474 588 482 596 M488 580 496 588 M504 574 514 584
      M204 408 222 404 248 418 232 430 206 424`,
  },
];

function Sheet({ sheet }: { sheet: MapSheet }) {
  return (
    <g transform={sheet.transform}>
      <path d={sheet.land} stroke="#e5e5e5" vectorEffect="non-scaling-stroke" />
      {sheet.stayed && (
        <path d={sheet.stayed} fill="#4ea6f5" stroke="#4696dd" vectorEffect="non-scaling-stroke" />
      )}
      {sheet.visited && (
        <path d={sheet.visited} fill="#17b5b0" stroke="#15a39e" vectorEffect="non-scaling-stroke" />
      )}
      {sheet.residency && (
        <path d={sheet.residency} fill="#faa3bb" stroke="#e193a8" vectorEffect="non-scaling-stroke" />
      )}
    </g>
  );
}

function WorldMap() {
  return (
    <svg
      viewBox="0 0 1572 1021"
      className="block h-auto w-full"
      fill="none"
      strokeWidth="2.3"
      strokeLinejoin="round"
      role="img"
      aria-label="World map"
    >
      {sheets.map((sheet) => (
        <Sheet key={sheet.transform} sheet={sheet} />
      ))}
      {/* Great Lakes */}
      <g transform="translate(-8 466) scale(.433673 .357143)" fill="#fff">
        <path d="M990 90 1004 90 996 102 992 152 984 152 986 118Z" />
        <path d="M950 70 956 60 976 54 968 62Z" />
      </g>
    </svg>
  );
}

function GlobeEmoji() {
  return (
    <svg viewBox="0 0 42 42" className="size-[42px] shrink-0" aria-hidden="true">
      <defs>
        <radialGradient id="sea" cx="0.4" cy="0.4" r="0.62">
          <stop offset="0" stopColor="#4b8fe8" />
          <stop offset="0.7" stopColor="#2457c0" />
          <stop offset="1" stopColor="#1b2a63" />
        </radialGradient>
        <linearGradient id="ground" x1="0" y1="0" x2="1" y2="1">
          <stop offset="0" stopColor="#9cc45a" />
          <stop offset="0.45" stopColor="#f1efa0" />
          <stop offset="1" stopColor="#b58a2c" />
        </linearGradient>
      </defs>
      <circle cx="21" cy="21" r="20.5" fill="url(#sea)" />
      <path
        fill="url(#ground)"
        d="M9 17l3-3 6-1 5 2 5 0 3 4 3 4 4-1-3 5-4 4-1 5-4 4-3-2-2-6-1-5-6-1-5-4zM12 10l3-3 2-3 6-2 5 1 6 4 4 5 2 6-3 3-4-5-5-2-4 1-3-3-4 1-3 1zM1 24l2 3 1 6-2-3z"
      />
      <path fill="#2a62c6" d="M16 11l4-1 2 2 5 0 1-2 3 2-2 2-5 0-3-2-3 1z" />
    </svg>
  );
}

function StatusBar() {
  return (
    <div className="flex h-16 items-center justify-between pr-[26px] pl-[31px] text-[28px] font-medium text-black">
      <div className="flex items-center gap-5">
        <span>23:12</span>
        <span>3月30日(月)</span>
      </div>
      <div className="flex items-center gap-2">
        <svg viewBox="0 0 30 22" className="h-[22px] w-[30px]" aria-hidden="true">
          <path d="M1 7.4a20 20 0 0 1 28 0l-2.9 2.9a16 16 0 0 0-22.2 0z" />
          <path d="M5.6 12a13.6 13.6 0 0 1 18.8 0l-2.9 2.9a9.4 9.4 0 0 0-13 0z" />
          <path d="M10.4 16.8a6.8 6.8 0 0 1 9.2 0L15 21.4z" />
        </svg>
        <span>10%</span>
        <svg viewBox="0 0 54 26" className="h-[26px] w-[54px]" fill="none" aria-hidden="true">
          <rect x="1" y="1" width="47" height="24" rx="7" stroke="#a5a4aa" strokeWidth="2" />
          <path d="M51 9c2.5 1 2.5 7 0 8z" fill="#a5a4aa" />
          <rect x="4" y="6" width="4" height="14" rx="2" fill="#fb3b3f" />
        </svg>
      </div>
    </div>
  );
}

function ScoreCard() {
  return (
    <section className="rounded-[20px] bg-linear-45 from-[#3aabd4] from-40% to-[#52aed1] to-65% px-5 pt-5 pb-[21px] text-white">
      <div className="inline-flex h-[58px] items-center gap-2.5 rounded-full bg-white px-[19px] align-top text-[27px] font-medium tracking-wide text-black">
        <FaEarthAmericas className="size-[30px] text-[#3aabd4]" />
        Country
      </div>
      <div className="mt-5 -mx-5 grid grid-cols-2">
        <div className="flex flex-col items-center">
          <h2 className="flex h-12 items-center gap-2.5 text-[34px] tracking-wide">
            <svg viewBox="0 0 40 40" className="size-10" fill="none" aria-hidden="true">
              <defs>
                <linearGradient id="score" x1="0" y1="0" x2="1" y2="1">
                  <stop offset="0.1" stopColor="#35d9ea" />
                  <stop offset="0.9" stopColor="#6b6cff" />
                </linearGradient>
              </defs>
              <circle cx="20" cy="20" r="20" fill="url(#score)" />
              <path d="M31 9 9 30v-5M12 17h11v10M20 17v3M9 30h4" stroke="#e6f5ff" strokeWidth="1.5" />
            </svg>
            LocoScore
          </h2>
          <p className="mt-2 flex items-baseline text-[58px] leading-[72px] font-semibold tracking-wide">
            6<span className="text-[32px]">pt</span>
          </p>
          <span className="mt-1.5 flex size-12 items-center justify-center rounded-full bg-[#cddc39] text-[28px] font-bold">
            C
          </span>
        </div>
        <div className="flex flex-col items-center">
          <h2 className="flex h-12 items-center text-[34px] tracking-wide">Progress</h2>
          <p className="mt-2 flex items-baseline text-[58px] leading-[72px] font-semibold tracking-wide">
            1.5<span className="text-[34px] font-normal">%</span>
          </p>
          <p className="mt-1.5 text-[38px] leading-10 tracking-wide">3 / 199</p>
        </div>
      </div>
    </section>
  );
}

function VisitTypeChart() {
  return (
    <section className="mt-[38px] h-[441px] overflow-hidden rounded-t-[20px] bg-white px-[34px] pt-[34px] text-[#333]">
      <h2 className="text-[30px] leading-10 font-semibold tracking-wide">By Visit Type</h2>
      <div className="mt-[45px] flex items-center gap-[50px] pl-[18px]">
        <svg viewBox="-126 -126 252 252" className="size-[252px]" role="img" aria-label="Visit types">
          <path d="M0 0V-125.500A125.500 125.500 0 0 1 108.700 62.700Z" fill="#faa3bb" />
          <path d="M0 0 108.700 62.700A125.500 125.500 0 0 1-108.700 62.700Z" fill="#4ea6f5" />
          <path d="M0 0-108.700 62.700A125.500 125.500 0 0 1 0-125.500Z" fill="#17b5b0" />
          <path d="M0-126V0L110 63.5M0 0-110 63.5" stroke="#fff" strokeWidth="3" fill="none" />
        </svg>
        <ul>
          {visitTypes.map((type) => (
            <li key={type.name} className="flex h-[54px] items-center gap-4 text-[26px] tracking-wide">
              <span className={`size-8 rounded-full ${type.dot}`} />
              {type.name}
            </li>
          ))}
        </ul>
      </div>
      <h2 className="mt-[53px] text-[30px] leading-10 font-semibold tracking-wide">Progress by Region (上記10件)</h2>
    </section>
  );
}

export default function App() {
  return (
    <main className="relative min-h-screen overflow-hidden bg-white pb-10">
      {/* Background circles */}
      <div className="absolute -top-[236px] -right-[222px] size-[1000px] rounded-full bg-[#f5f9ff]" />
      <div className="absolute top-[1039px] -left-[202px] size-[654px] rounded-full bg-[#f7faff]" />
      <div className="absolute top-[1678px] right-[164px] size-[456px] rounded-full bg-[#f7f9ff]" />
      <div className="absolute top-[2121px] left-[247px] size-[780px] rounded-full bg-[#fafbff]" />

      <header className="relative px-[132px] pt-20 font-['Noto_Sans',sans-serif]">
        <div className="inline-flex items-center gap-2.5 rounded-full border-[3px] border-[#dbe8fe] bg-[#f3f8ff] px-9 py-[18px] align-top text-[42px] leading-[58px] font-semibold text-[#3b82f6]">
          <GlobeEmoji />
          Countries
        </div>
        <h1 className="mt-[37px] text-[96px] leading-[115px] font-extrabold tracking-[-0.02em] text-[#0f172a]">
          Visualize Countries Visited
        </h1>
      </header>

      <div className="relative mt-8 overflow-hidden px-[219px] pt-6 font-[Inter,'Noto_Sans_CJK_JP',sans-serif]">
        <div className="relative rounded-[44px] bg-[#f1f0f6] pb-[38px] shadow-[0_20px_60px_rgba(0,0,0,0.18)]">
          <StatusBar />
          <nav className="flex h-[135px] items-center justify-between px-[30px] pb-[29px] text-[#333]">
            <button type="button" aria-label="Back" className="flex size-12 items-center justify-center">
              <svg viewBox="0 0 24 40" className="h-10 w-6" fill="none" aria-hidden="true">
                <path
                  d="M20 3 4 20l16 17"
                  stroke="currentColor"
                  strokeWidth="4.5"
                  strokeLinecap="round"
                  strokeLinejoin="round"
                />
              </svg>
            </button>
            <div className="flex gap-14">
              <button type="button" aria-label="Data" className="flex size-14 items-center justify-center">
                <FaDatabase className="size-[54px]" />
              </button>
              <button type="button" aria-label="Share" className="flex size-14 items-center justify-center">
                <svg
                  viewBox="0 0 40 54"
                  className="h-[54px] w-10"
                  fill="none"
                  stroke="currentColor"
                  strokeWidth="4.8"
                  aria-hidden="true"
                >
                  <path d="M12.5 19.500H3V49a2 2 0 0 0 2 2h30a2 2 0 0 0 2-2V19.500h-9.500" strokeLinejoin="round" />
                  <path d="M20 37V5M12 12.500l8-8.500 8 8.500" />
                </svg>
              </button>
            </div>
          </nav>

          <div className="px-[19px]">
            <ScoreCard />
            <section className="mt-[38px] overflow-hidden rounded-[20px] bg-white">
              <WorldMap />
            </section>
            <div className="flex justify-end px-[9px] pt-7">
              <button type="button" aria-label="Full screen" className="text-[#4ea6f5]">
                <svg viewBox="0 0 37 37" className="size-[37px]" fill="currentColor" aria-hidden="true">
                  <path d="M0 0h12.500L8.500 4.500 13.500 10 11 13 5 8 0 12.500zM37 0H24.500l4 4.500-5 5.500 2.500 3 6-5 5 4.500zM0 37h12.500l-4-4.500 5-5.500L11 24l-6 5-5-4.500zM37 37H24.500l4-4.500-5-5.500 2.500-3 6 5 5-4.500z" />
                </svg>
              </button>
            </div>
            <ul className="mt-9 text-[26px] leading-[39px] tracking-wide text-[#333]">
              {visitTypes.map((type) => (
                <li key={type.name} className="flex items-center gap-2.5">
                  <span className={`size-[29px] rounded-full ${type.dot}`} />
                  {type.name}：{type.note}
                </li>
              ))}
            </ul>
            <VisitTypeChart />
          </div>

          <button
            type="button"
            aria-label="Add"
            className="absolute right-[31px] bottom-[70px] flex size-[108px] items-center justify-center rounded-[30px] bg-[#4ea6f5] shadow-[0_10px_20px_rgba(0,0,0,0.28)]"
          >
            <svg viewBox="0 0 28 28" className="size-7" stroke="#fff" strokeWidth="4" strokeLinecap="round" aria-hidden="true">
              <path d="M14 2v24M2 14h24" />
            </svg>
          </button>
          <svg viewBox="0 0 31 31" className="absolute right-2 bottom-2 size-[31px]" fill="none" aria-hidden="true">
            <path d="M27 4A23 23 0 0 1 4 27" stroke="#000" strokeWidth="7" strokeLinecap="round" />
          </svg>
        </div>
      </div>
    </main>
  );
}
